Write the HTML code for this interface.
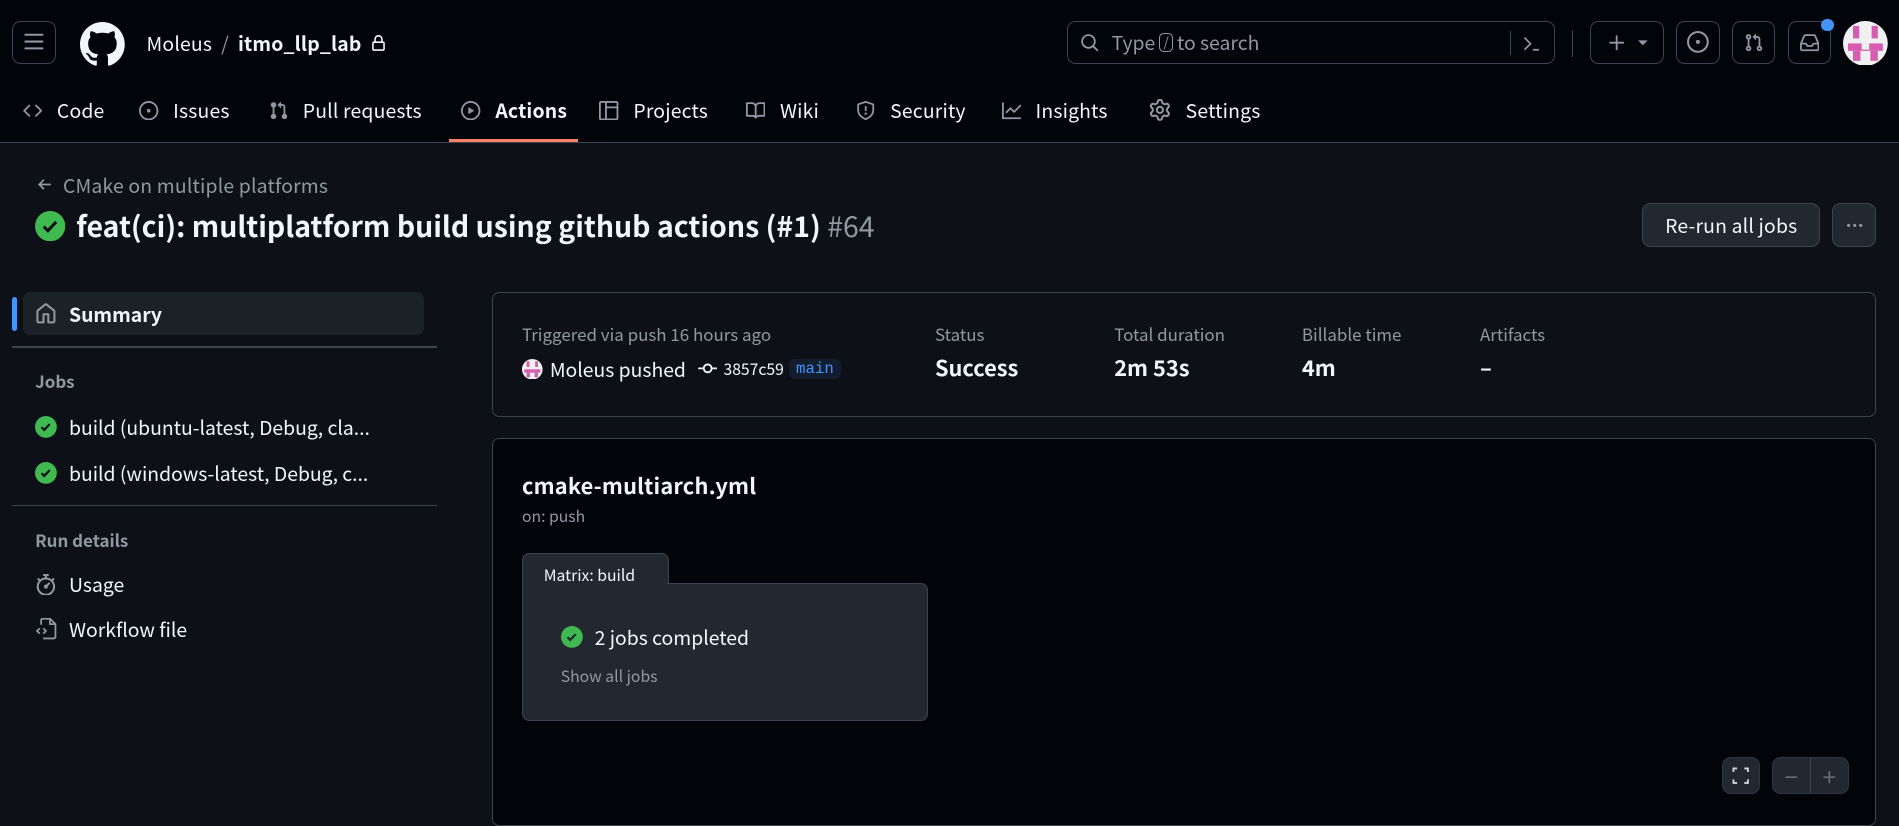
<!DOCTYPE html>
<html><head><meta charset="utf-8">
<style>
html{zoom:1.21110}
*{box-sizing:border-box;margin:0;padding:0}
body{width:1568px;height:667px;overflow:hidden;background:#0d1117;color:#f0f6fc;font-family:"Noto Sans CJK JP","Liberation Sans",sans-serif;font-size:16px;position:relative}
.a{position:absolute}
.hdr{position:absolute;left:0;top:0;width:1568px;height:118px;background:#010409;border-bottom:1px solid #3d444d}
.btn{position:absolute;border:1px solid #3d444d;border-radius:7px;display:flex;align-items:center;justify-content:center}
svg{display:block}
.nav{position:absolute;top:80px;height:22px;display:flex;align-items:center;gap:12px;font-size:16px;color:#f0f6fc;white-space:nowrap;letter-spacing:0.15px}
.nav svg{fill:#9198a1}
.muted{color:#9198a1}
.g{fill:#3fb950}
.side{position:absolute;left:29px;display:flex;align-items:center;gap:10px;white-space:nowrap}
.lbl{font-size:14px;color:#9198a1}
.val{font-size:18px;font-weight:bold}
</style></head><body>
<div class="hdr"></div>
<div class="btn" style="left:10px;top:17px;width:36px;height:36px"><svg width="18" height="18" viewBox="0 0 16 16" fill="#9198a1"><path d="M1 2.75A.75.75 0 0 1 1.75 2h12.5a.75.75 0 0 1 0 1.5H1.75A.75.75 0 0 1 1 2.75Zm0 5A.75.75 0 0 1 1.75 7h12.5a.75.75 0 0 1 0 1.5H1.75A.75.75 0 0 1 1 7.75ZM1.75 12h12.5a.75.75 0 0 1 0 1.5H1.75a.75.75 0 0 1 0-1.5Z"/></svg></div>
<svg class="a" style="left:66px;top:18px" width="37" height="37" viewBox="0 0 16 16" fill="#f0f6fc"><path d="M8 0c4.42 0 8 3.58 8 8a8.013 8.013 0 0 1-5.45 7.590c-.4.08-.55-.17-.55-.38 0-.27.01-1.13.01-2.2 0-.75-.25-1.23-.54-1.48 1.78-.2 3.650-.88 3.650-3.95 0-.88-.31-1.59-.82-2.15.08-.2.36-1.02-.08-2.12 0 0-.67-.22-2.2.82-.64-.18-1.32-.27-2-.27-.68 0-1.36.09-2 .27-1.53-1.03-2.2-.82-2.2-.82-.44 1.1-.16 1.92-.08 2.12-.51.56-.82 1.28-.82 2.15 0 3.06 1.86 3.75 3.64 3.95-.23.2-.44.55-.51 1.07-.46.21-1.61.55-2.33-.66-.15-.24-.6-.83-1.23-.82-.67.01-.27.38.01.53.34.19.73.9.82 1.13.16.45.68 1.31 2.69.94 0 .67.01 1.3.01 1.49 0 .21-.15.45-.55.38A7.995 7.995 0 0 1 0 8c0-4.42 3.58-8 8-8Z"/></svg>
<div class="a" style="left:121px;top:24px;font-size:16px;white-space:nowrap;display:flex;align-items:center;letter-spacing:0.15px">Moleus <span class="muted">&nbsp;&nbsp;/&nbsp;&nbsp;</span><b>itmo_llp_lab</b><svg style="margin-left:7px" width="14" height="14" viewBox="0 0 16 16" fill="#f0f6fc"><path d="M4 4a4 4 0 0 1 8 0v2h.25c.966 0 1.75.784 1.75 1.75v5.5A1.75 1.75 0 0 1 12.25 15h-8.5A1.75 1.75 0 0 1 2 13.25v-5.5C2 6.784 2.784 6 3.75 6H4Zm8.25 3.5h-8.5a.25.25 0 0 0-.25.25v5.5c0 .138.112.25.25.25h8.5a.25.25 0 0 0 .25-.25v-5.5a.25.25 0 0 0-.25-.25ZM10.5 6V4a2.5 2.5 0 1 0-5 0v2Z"/></svg></div>
<div class="btn" style="left:881px;top:17px;width:403px;height:36px;justify-content:flex-start;padding-left:10px;color:#9198a1;font-size:16px">
<svg width="16" height="16" viewBox="0 0 16 16" fill="#9198a1"><path d="M10.68 11.74a6 6 0 0 1-7.922-8.982 6 6 0 0 1 8.982 7.922l3.04 3.04a.749.749 0 1 1-1.06 1.06ZM11.5 7a4.499 4.499 0 1 0-8.997 0A4.499 4.499 0 0 0 11.5 7Z"/></svg>
<span style="margin-left:10px">Type</span><span style="border:1px solid #9198a1;border-radius:4px;font-size:11px;padding:0 3px;margin:0 3px;line-height:14px">/</span><span>to search</span>
<span style="position:absolute;left:365px;top:8px;width:1px;height:20px;background:#3d444d"></span>
<svg style="position:absolute;left:375px;top:10px" width="16" height="16" viewBox="0 0 16 16" fill="none" stroke="#9198a1" stroke-width="1.4"><path d="M2 3l5 5-5 5M9 13h5"/></svg></div>
<div class="a" style="left:1298px;top:25px;width:1px;height:22px;background:#3d444d"></div>
<div class="btn" style="left:1313px;top:17px;width:61px;height:36px"><svg width="16" height="16" viewBox="0 0 16 16" fill="none" stroke="#9198a1" stroke-width="1.5"><path d="M8 2v12M2 8h12"/></svg><svg style="margin-left:10px" width="8" height="8" viewBox="0 0 8 8" fill="#9198a1"><path d="M0 2h8L4 6z"/></svg></div>
<div class="btn" style="left:1384px;top:17px;width:36px;height:36px"><svg width="18" height="18" viewBox="0 0 16 16" fill="#9198a1"><path d="M8 9.5a1.5 1.5 0 1 0 0-3 1.5 1.5 0 0 0 0 3Z"/><path d="M8 0a8 8 0 1 1 0 16A8 8 0 0 1 8 0ZM1.5 8a6.5 6.5 0 1 0 13 0 6.5 6.5 0 0 0-13 0Z"/></svg></div>
<div class="btn" style="left:1430px;top:17px;width:36px;height:36px"><svg width="16" height="16" viewBox="0 0 16 16" fill="#9198a1"><path d="M1.5 3.25a2.25 2.25 0 1 1 3 2.122v5.256a2.251 2.251 0 1 1-1.5 0V5.372A2.25 2.25 0 0 1 1.5 3.25Zm5.677-.177L9.573.677A.25.25 0 0 1 10 .854V2.5h1A2.5 2.5 0 0 1 13.5 5v5.628a2.251 2.251 0 1 1-1.5 0V5a1 1 0 0 0-1-1h-1v1.646a.25.25 0 0 1-.427.177L7.177 3.427a.25.25 0 0 1 0-.354ZM3.75 2.5a.75.75 0 1 0 0 1.5.75.75 0 0 0 0-1.5Zm0 9.5a.75.75 0 1 0 0 1.5.75.75 0 0 0 0-1.5Zm8.25.75a.75.75 0 1 0 1.5 0 .75.75 0 0 0-1.5 0Z"/></svg></div>
<div class="btn" style="left:1476px;top:17px;width:36px;height:36px"><svg width="16" height="16" viewBox="0 0 16 16" fill="#9198a1"><path d="M2.8 2.06A1.75 1.75 0 0 1 4.41 1h7.18c.7 0 1.333.417 1.61 1.06l2.74 6.395c.04.093.06.194.06.295v4.5A1.75 1.75 0 0 1 14.25 15H1.75A1.75 1.75 0 0 1 0 13.25v-4.5c0-.101.02-.202.06-.295Zm1.61.44a.25.25 0 0 0-.23.152L1.887 8H4.75a.75.75 0 0 1 .6.3L6.625 10h2.75l1.275-1.7a.75.75 0 0 1 .6-.3h2.863L11.82 2.652a.25.25 0 0 0-.23-.152Zm10.09 7h-2.875l-1.275 1.7a.75.75 0 0 1-.6.3h-3.5a.75.75 0 0 1-.6-.3L4.375 9.5H1.5v3.750c0 .138.112.25.25.25h12.5a.25.25 0 0 0 .25-.25Z"/></svg></div>
<div class="a" style="left:1504px;top:16px;width:10px;height:10px;border-radius:50%;background:#4493f8"></div>
<svg class="a" style="left:1522px;top:17px" width="37" height="37" viewBox="0 0 36 36"><circle cx="18" cy="18" r="18" fill="#f0f0f0"/><g fill="#d65db1"><rect x="8" y="4" width="5" height="10"/><rect x="23" y="4" width="5" height="10"/><rect x="4" y="18" width="28" height="6"/><rect x="8" y="24" width="6" height="8"/><rect x="22" y="24" width="6" height="8"/><rect x="15" y="18" width="6" height="5" fill="#f0f0f0"/></g></svg>

<div class="nav" style="left:19px"><svg width="16" height="16" viewBox="0 0 16 16"><path d="m11.28 3.22 4.25 4.25a.75.75 0 0 1 0 1.06l-4.25 4.25a.749.749 0 0 1-1.275-.326.749.749 0 0 1 .215-.734L13.94 8l-3.72-3.72a.749.749 0 0 1 .326-1.275.749.749 0 0 1 .734.215Zm-6.56 0a.751.751 0 0 1 1.042.018.751.751 0 0 1 .018 1.042L2.060 8l3.720 3.72a.749.749 0 0 1-.326 1.275.749.749 0 0 1-.734-.215L.47 8.53a.75.75 0 0 1 0-1.060Z"/></svg>Code</div>
<div class="nav" style="left:115px"><svg width="16" height="16" viewBox="0 0 16 16"><path d="M8 9.5a1.5 1.5 0 1 0 0-3 1.5 1.5 0 0 0 0 3Z"/><path d="M8 0a8 8 0 1 1 0 16A8 8 0 0 1 8 0ZM1.5 8a6.5 6.5 0 1 0 13 0 6.5 6.5 0 0 0-13 0Z"/></svg>Issues</div>
<div class="nav" style="left:222px"><svg width="16" height="16" viewBox="0 0 16 16"><path d="M1.5 3.25a2.25 2.25 0 1 1 3 2.122v5.256a2.251 2.251 0 1 1-1.5 0V5.372A2.25 2.25 0 0 1 1.5 3.25Zm5.677-.177L9.573.677A.25.25 0 0 1 10 .854V2.5h1A2.5 2.5 0 0 1 13.5 5v5.628a2.251 2.251 0 1 1-1.5 0V5a1 1 0 0 0-1-1h-1v1.646a.25.25 0 0 1-.427.177L7.177 3.427a.25.25 0 0 1 0-.354Z"/></svg>Pull requests</div>
<div class="nav" style="left:381px;font-weight:bold"><svg width="16" height="16" viewBox="0 0 16 16"><path d="M8 0a8 8 0 1 1 0 16A8 8 0 0 1 8 0ZM1.5 8a6.5 6.5 0 1 0 13 0 6.5 6.5 0 0 0-13 0Zm4.879-2.773 4.264 2.559a.25.25 0 0 1 0 .428l-4.264 2.559A.25.25 0 0 1 6 10.559V5.442a.25.25 0 0 1 .379-.215Z"/></svg>Actions</div>
<div class="a" style="left:371px;top:115px;width:106px;height:2px;background:#f78166"></div>
<div class="nav" style="left:495px"><svg width="16" height="16" viewBox="0 0 16 16"><path d="M1.75 0h12.5C15.216 0 16 .784 16 1.75v12.5A1.75 1.75 0 0 1 14.25 16H1.75A1.75 1.75 0 0 1 0 14.25V1.75C0 .784.784 0 1.75 0ZM1.5 1.75v12.5c0 .138.112.25.25.25H5v-13H1.75a.25.25 0 0 0-.25.25ZM6.5 14.5h7.75a.25.25 0 0 0 .25-.25V6h-8Zm8-10V1.75a.25.25 0 0 0-.25-.25H6.5v3Z"/></svg>Projects</div>
<div class="nav" style="left:616px"><svg width="16" height="16" viewBox="0 0 16 16"><path d="M0 1.75A.75.75 0 0 1 .75 1h4.253c1.227 0 2.317.59 3 1.501A3.743 3.743 0 0 1 11.006 1h4.245a.75.75 0 0 1 .75.75v10.5a.75.75 0 0 1-.75.75h-4.507a2.25 2.25 0 0 0-1.591.659l-.622.621a.75.75 0 0 1-1.06 0l-.622-.621A2.25 2.25 0 0 0 5.258 13H.75a.75.75 0 0 1-.75-.75Zm7.251 10.324.004-5.073-.002-2.253A2.25 2.25 0 0 0 5.003 2.5H1.5v9h3.757a3.75 3.75 0 0 1 1.994.574ZM8.755 4.75l-.004 7.322a3.752 3.752 0 0 1 1.992-.572H14.5v-9h-3.495a2.25 2.25 0 0 0-2.25 2.25Z"/></svg>Wiki</div>
<div class="nav" style="left:707px"><svg width="16" height="16" viewBox="0 0 16 16"><path d="M7.467.133a1.748 1.748 0 0 1 1.066 0l5.25 1.68A1.75 1.75 0 0 1 15 3.48V7c0 1.566-.32 3.182-1.303 4.682-.983 1.498-2.585 2.813-5.032 3.855a1.697 1.697 0 0 1-1.33 0c-2.447-1.042-4.049-2.357-5.032-3.855C1.32 10.182 1 8.566 1 7V3.48a1.755 1.755 0 0 1 1.217-1.667Zm.61 1.429a.25.25 0 0 0-.153 0l-5.25 1.68a.25.25 0 0 0-.174.238V7c0 1.358.275 2.666 1.057 3.86.784 1.194 2.121 2.34 4.366 3.297a.196.196 0 0 0 .154 0c2.245-.956 3.582-2.104 4.366-3.298C13.225 9.666 13.5 8.36 13.5 7V3.48a.251.251 0 0 0-.174-.237l-5.25-1.68ZM8.75 4.75v3a.75.75 0 0 1-1.5 0v-3a.75.75 0 0 1 1.5 0ZM9 10.5a1 1 0 1 1-2 0 1 1 0 0 1 2 0Z"/></svg>Security</div>
<div class="nav" style="left:827px"><svg width="16" height="16" viewBox="0 0 16 16"><path d="M1.5 1.75V13.5h13.75a.75.75 0 0 1 0 1.5H.75a.75.75 0 0 1-.75-.75V1.75a.75.75 0 0 1 1.5 0Zm14.28 2.53-5.25 5.25a.75.75 0 0 1-1.06 0L7 7.06 4.28 9.78a.751.751 0 0 1-1.042-.018.751.751 0 0 1-.018-1.042l3.25-3.25a.75.75 0 0 1 1.06 0L10 7.94l4.72-4.72a.751.751 0 0 1 1.042.018.751.751 0 0 1 .018 1.042Z"/></svg>Insights</div>
<div class="nav" style="left:949px"><svg width="18" height="18" viewBox="0 0 16 16"><path d="M8 0a8.2 8.2 0 0 1 .701.031C9.444.095 9.99.645 10.16 1.29l.288 1.107c.018.066.079.158.212.224.231.114.454.243.668.386.123.082.233.09.299.071l1.103-.303c.644-.176 1.392.021 1.82.63.27.385.506.792.704 1.218.315.675.111 1.422-.364 1.891l-.814.806c-.049.048-.098.147-.088.294.016.257.016.515 0 .772-.01.147.038.246.088.294l.814.806c.475.469.679 1.216.364 1.891a7.977 7.977 0 0 1-.704 1.217c-.428.61-1.176.807-1.82.63l-1.102-.302c-.067-.019-.177-.011-.3.071a5.909 5.909 0 0 1-.668.386c-.133.066-.194.158-.211.224l-.29 1.106c-.168.646-.715 1.196-1.458 1.26a8.006 8.006 0 0 1-1.402 0c-.743-.064-1.289-.614-1.458-1.26l-.289-1.106c-.018-.066-.079-.158-.212-.224a5.738 5.738 0 0 1-.668-.386c-.123-.082-.233-.09-.299-.071l-1.103.303c-.644.176-1.392-.021-1.82-.63a8.12 8.12 0 0 1-.704-1.218c-.315-.675-.111-1.422.363-1.891l.815-.806c.05-.048.098-.147.088-.294a6.214 6.214 0 0 1 0-.772c.01-.147-.038-.246-.088-.294l-.815-.806C.635 6.045.431 5.298.746 4.623a7.92 7.920 0 0 1 .704-1.217c.428-.61 1.176-.807 1.82-.63l1.102.302c.067.019.177.011.3-.071.214-.143.437-.272.668-.386.133-.066.194-.158.211-.224l.29-1.106C6.009.645 6.556.095 7.299.03 7.53.01 7.764 0 8 0Zm-.571 1.525c-.036.003-.108.036-.137.146l-.289 1.105c-.147.561-.549.967-.998 1.189-.173.086-.34.183-.5.29-.417.278-.97.423-1.529.27l-1.103-.303c-.109-.03-.175.016-.195.045-.22.312-.412.644-.573.99-.014.031-.021.11.059.19l.815.806c.411.406.562.957.53 1.456a4.709 4.709 0 0 0 0 .582c.032.499-.119 1.05-.53 1.456l-.815.806c-.081.08-.073.159-.059.19.162.346.353.677.573.989.02.03.085.076.195.046l1.102-.303c.56-.153 1.113-.008 1.53.27.161.107.328.204.501.29.447.222.85.629.997 1.189l.289 1.105c.029.109.101.143.137.146a6.6 6.6 0 0 0 1.142 0c.036-.003.108-.036.137-.146l.289-1.105c.147-.561.549-.967.998-1.189.173-.086.34-.183.5-.29.417-.278.97-.423 1.529-.27l1.103.303c.109.029.175-.016.195-.045.22-.313.411-.644.573-.99.014-.031.021-.11-.059-.19l-.815-.806c-.411-.406-.562-.957-.53-1.456a4.709 4.709 0 0 0 0-.582c-.032-.499.119-1.05.53-1.456l.815-.806c.081-.08.073-.159.059-.19a6.464 6.464 0 0 0-.573-.989c-.02-.03-.085-.076-.195-.046l-1.102.303c-.56.153-1.113.008-1.53-.27a4.44 4.44 0 0 0-.501-.29c-.447-.222-.85-.629-.997-1.189l-.289-1.105c-.029-.11-.101-.143-.137-.146a6.6 6.6 0 0 0-1.142 0ZM11 8a3 3 0 1 1-6 0 3 3 0 0 1 6 0ZM9.5 8a1.5 1.5 0 1 0-3.001.001A1.5 1.5 0 0 0 9.5 8Z"/></svg>Settings</div>

<div class="a muted" style="left:30px;top:141px;font-size:16px;white-space:nowrap;display:flex;align-items:center;letter-spacing:0.15px"><svg width="14" height="14" viewBox="0 0 16 16" fill="none" stroke="#9198a1" stroke-width="1.6"><path d="M14 8H3M7.5 3.5L3 8l4.5 4.5"/></svg><span style="margin-left:8px">CMake on multiple platforms</span></div>
<svg class="a" style="left:29px;top:174px" width="25" height="25" viewBox="0 0 16 16"><circle cx="8" cy="8" r="8" class="g"/><path d="M4.6 8.2l2.2 2.2 4.4-4.6" stroke="#0d1117" stroke-width="1.6" fill="none"/></svg>
<div class="a" style="left:63px;top:169px;font-size:23.5px;font-weight:bold;white-space:nowrap">feat(ci): multiplatform build using github actions (#1) <span class="muted" style="font-weight:normal">#64</span></div>
<div class="btn" style="left:1356px;top:168px;width:147px;height:36px;background:#212830;font-size:16px;letter-spacing:0.15px">Re-run all jobs</div>
<div class="btn" style="left:1513px;top:168px;width:36px;height:36px;background:#212830"><svg width="16" height="4" viewBox="0 0 16 4" fill="#9198a1"><circle cx="3" cy="2" r="1.3"/><circle cx="8" cy="2" r="1.3"/><circle cx="13" cy="2" r="1.3"/></svg></div>

<div class="a" style="left:10px;top:245px;width:4px;height:28px;border-radius:2px;background:#4493f8"></div>
<div class="a" style="left:19px;top:241px;width:331px;height:36px;border-radius:6px;background:#1c2128"></div>
<div class="side" style="top:248px;font-weight:bold"><svg width="18" height="18" viewBox="0 0 16 16" fill="#9198a1"><path d="M6.906.664a1.749 1.749 0 0 1 2.187 0l5.25 4.2c.415.332.657.835.657 1.367v7.019A1.75 1.75 0 0 1 13.25 15h-3.5a.75.75 0 0 1-.75-.75V9H7v5.25a.75.75 0 0 1-.75.75h-3.5A1.75 1.75 0 0 1 1 13.25V6.23c0-.531.242-1.034.657-1.366l5.25-4.2Zm1.25 1.171a.25.25 0 0 0-.312 0l-5.25 4.2a.25.25 0 0 0-.094.196v7.019c0 .138.112.25.25.25H5.5V8.25a.75.75 0 0 1 .75-.75h3.5a.75.75 0 0 1 .75.75v5.25h2.75a.25.25 0 0 0 .25-.25V6.23a.25.25 0 0 0-.094-.195Z"/></svg>Summary</div>
<div class="a" style="left:10px;top:286px;width:351px;height:1px;background:#3d444d"></div>
<div class="a" style="left:29px;top:304px;font-size:14px;font-weight:bold;color:#9198a1">Jobs</div>
<div class="side" style="top:341px"><svg width="18" height="18" viewBox="0 0 16 16"><circle cx="8" cy="8" r="8" class="g"/><path d="M4.8 8.2l2 2 4-4.2" stroke="#0d1117" stroke-width="1.6" fill="none"/></svg>build (ubuntu-latest, Debug, cla...</div>
<div class="side" style="top:379px"><svg width="18" height="18" viewBox="0 0 16 16"><circle cx="8" cy="8" r="8" class="g"/><path d="M4.8 8.2l2 2 4-4.2" stroke="#0d1117" stroke-width="1.6" fill="none"/></svg>build (windows-latest, Debug, c...</div>
<div class="a" style="left:10px;top:417px;width:351px;height:1px;background:#3d444d"></div>
<div class="a" style="left:29px;top:435px;font-size:14px;font-weight:bold;color:#9198a1">Run details</div>
<div class="side" style="top:471px"><svg width="18" height="18" viewBox="0 0 16 16" fill="#9198a1"><path d="M5.75.75A.75.75 0 0 1 6.5 0h3a.75.75 0 0 1 0 1.5h-.75v1l-.001.041a6.724 6.724 0 0 1 3.464 1.435l.007-.006.75-.75a.749.749 0 0 1 1.275.326.749.749 0 0 1-.215.734l-.75.75-.006.007a6.75 6.75 0 1 1-10.548 0L2.72 5.03l-.75-.75a.751.751 0 0 1 .018-1.042.751.751 0 0 1 1.042-.018l.75.75.007.006A6.72 6.72 0 0 1 7.25 2.541V1.5H6.5a.75.75 0 0 1-.75-.75ZM8 14.5A5.25 5.25 0 1 0 8 4a5.25 5.25 0 0 0 0 10.5Zm.389-6.7 1.33-1.33a.75.75 0 1 1 1.061 1.06L9.45 8.861A1.503 1.503 0 0 1 8 10.75a1.499 1.499 0 1 1 .389-2.950Z"/></svg>Usage</div>
<div class="side" style="top:508px"><svg width="18" height="18" viewBox="0 0 16 16" fill="none" stroke="#9198a1" stroke-width="1.3"><path d="M4.5 5V1.5a1 1 0 0 1 1-1h5.5l4 4v9.5a1 1 0 0 1-1 1H6M11 .5v4h4M3.5 7.5L1.5 9.5l2 2M6 7.5l2 2-2 2"/></svg>Workflow file</div>

<div class="a" style="left:406px;top:241px;width:1143px;height:103px;border:1px solid #3d444d;border-radius:6px"></div>
<div class="a lbl" style="left:431px;top:265px">Triggered via push 16 hours ago</div>
<div class="a" style="left:431px;top:293px;display:flex;align-items:center;white-space:nowrap;font-size:16px">
<svg width="17" height="17" viewBox="0 0 36 36"><circle cx="18" cy="18" r="18" fill="#f0f0f0"/><g fill="#d65db1"><rect x="8" y="4" width="5" height="10"/><rect x="23" y="4" width="5" height="10"/><rect x="4" y="18" width="28" height="6"/><rect x="8" y="24" width="6" height="8"/><rect x="22" y="24" width="6" height="8"/></g></svg>
<span style="margin-left:6px">Moleus pushed</span>
<svg style="margin-left:10px" width="16" height="16" viewBox="0 0 16 16" fill="#f0f6fc"><path d="M11.93 8.5a4.002 4.002 0 0 1-7.86 0H.75a.75.75 0 0 1 0-1.5h3.32a4.002 4.002 0 0 1 7.86 0h3.32a.75.75 0 0 1 0 1.5Zm-1.43-.75a2.5 2.5 0 1 0-5 0 2.5 2.5 0 0 0 5 0Z"/></svg>
<span style="margin-left:5px;font-size:13px">3857c59</span>
<span style="margin-left:4px;font-size:13px;color:#4493f8;background:#121d2f;border-radius:5px;padding:1px 6px;font-family:'Liberation Mono',monospace">main</span></div>
<div class="a lbl" style="left:772px;top:265px">Status</div><div class="a val" style="left:772px;top:291px">Success</div>
<div class="a lbl" style="left:920px;top:265px">Total duration</div><div class="a val" style="left:920px;top:291px">2m 53s</div>
<div class="a lbl" style="left:1075px;top:265px">Billable time</div><div class="a val" style="left:1075px;top:291px">4m</div>
<div class="a lbl" style="left:1222px;top:265px">Artifacts</div><div class="a val" style="left:1222px;top:291px">–</div>

<div class="a" style="left:406px;top:362px;width:1143px;height:320px;border:1px solid #3d444d;border-radius:6px;background:#010409"></div>
<div class="a" style="left:431px;top:388px;font-size:18px;font-weight:bold;letter-spacing:0.15px">cmake-multiarch.yml</div>
<div class="a muted" style="left:431px;top:416px;font-size:13px">on: push</div>
<div class="a" style="left:431px;top:457px;width:121px;height:30px;background:#212830;border:1px solid #3d444d;border-bottom:none;border-radius:6px 6px 0 0"></div>
<div class="a" style="left:431px;top:481px;width:335px;height:114px;background:#212830;border:1px solid #3d444d;border-radius:0 6px 6px 6px"></div>
<div class="a" style="left:432px;top:478px;width:119px;height:6px;background:#212830"></div>
<div class="a" style="left:449px;top:465px;font-size:13px">Matrix: build</div>
<svg class="a" style="left:463px;top:517px" width="18" height="18" viewBox="0 0 16 16"><circle cx="8" cy="8" r="8" class="g"/><path d="M4.8 8.2l2 2 4-4.2" stroke="#212830" stroke-width="1.6" fill="none"/></svg>
<div class="a" style="left:491px;top:514px;font-size:16px">2 jobs completed</div>
<div class="a muted" style="left:463px;top:548px;font-size:13px">Show all jobs</div>

<div class="btn" style="left:1422px;top:625px;width:31px;height:31px;background:#212830;border-color:#30363d"><svg width="16" height="16" viewBox="0 0 16 16" fill="none" stroke="#d1d7e0" stroke-width="1.5"><path d="M2 5V2h3M11 2h3v3M14 11v3h-3M5 14H2v-3"/></svg></div>
<div class="btn" style="left:1463px;top:625px;width:64px;height:31px;background:#212830;border-color:#30363d;color:#656c76;font-size:20px"><span style="width:31px;text-align:center;border-right:1px solid #3d444d">−</span><span style="width:31px;text-align:center">+</span></div>
</body></html>
